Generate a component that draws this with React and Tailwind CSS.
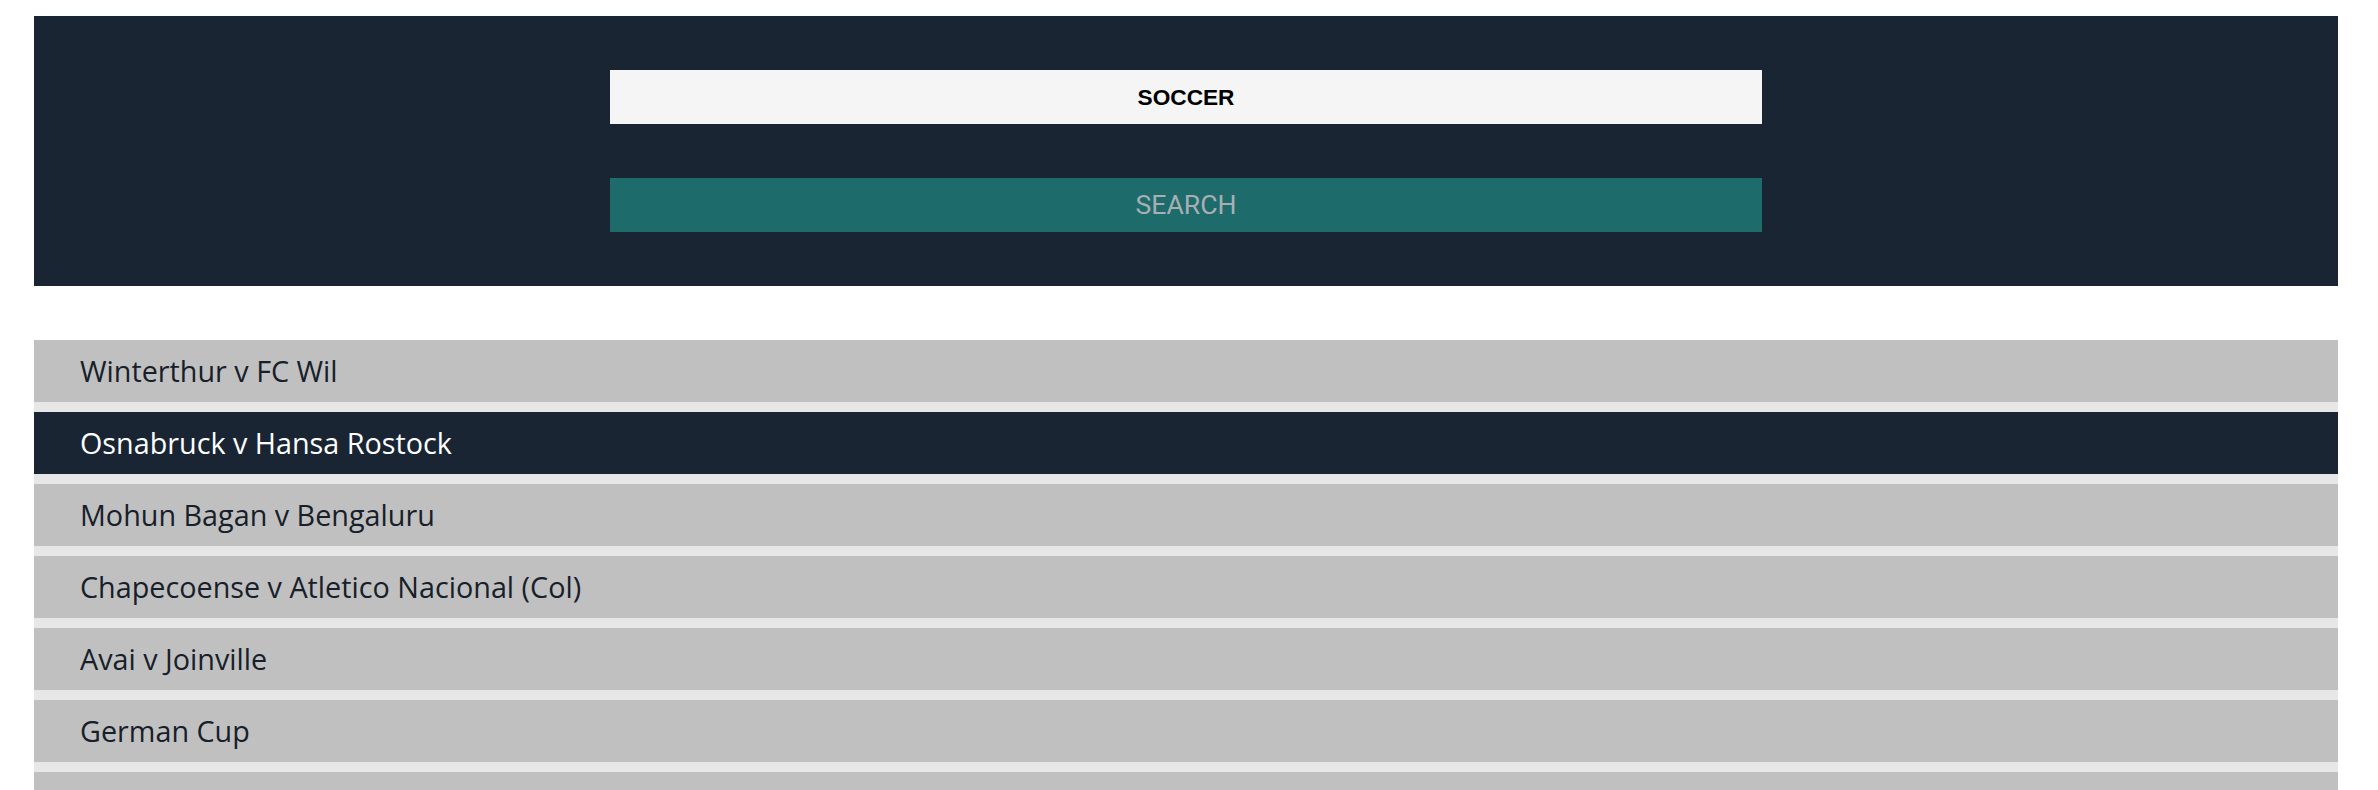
import React from "react";

const matches = [
  "Winterthur v FC Wil",
  "Osnabruck v Hansa Rostock",
  "Mohun Bagan v Bengaluru",
  "Chapecoense v Atletico Nacional (Col)",
  "Avai v Joinville",
  "German Cup",
  "",
];

export default function App() {
  const selected = 1;

  return (
    <div className="min-h-screen bg-white pt-[16px] pl-[34px] pr-[40px]">
      {/* Search panel */}
      <div className="bg-[#192533] py-[54px] flex flex-col items-center gap-[54px]">
        <div className="w-1/2 h-[54px] bg-[#f5f5f5] flex items-center justify-center text-black font-bold text-[22.67px] font-['Liberation_Sans',Arial,sans-serif]">
          SOCCER
        </div>
        <button className="w-1/2 h-[54px] bg-[#1d6b6b] flex items-center justify-center text-[#a7afb3] text-[26.67px] font-['Roboto',sans-serif]">
          SEARCH
        </button>
      </div>

      {/* Results */}
      <ul className="mt-[54px] bg-[#e7e7e7] flex flex-col gap-[10px] font-['Open_Sans',sans-serif]">
        {matches.map((m, i) => (
          <li
            key={i}
            className={`h-[62px] flex items-center pl-[46px] text-[28.75px] ${
              i === selected ? "bg-[#192533] text-white" : "bg-[#c0c0c0] text-[#17202a]"
            }`}
          >
            {m}
          </li>
        ))}
      </ul>
    </div>
  );
}
